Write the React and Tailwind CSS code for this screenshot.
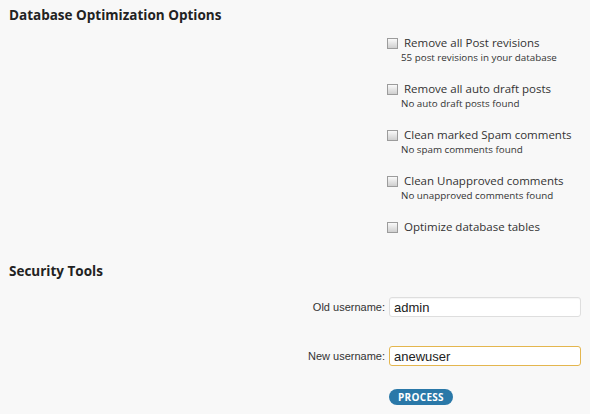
import React, { useState } from 'react'

const options = [
  { label: 'Remove all Post revisions', note: '55 post revisions in your database' },
  { label: 'Remove all auto draft posts', note: 'No auto draft posts found' },
  { label: 'Clean marked Spam comments', note: 'No spam comments found' },
  { label: 'Clean Unapproved comments', note: 'No unapproved comments found' },
  { label: 'Optimize database tables', note: null },
]

function Checkbox() {
  return (
    <span className="mt-[3px] block h-[11px] w-[11px] shrink-0 border border-[#9c9c9c] bg-linear-to-b from-[#fafafa] to-[#cfcfcf]" />
  )
}

export default function App() {
  const [oldName, setOldName] = useState('admin')
  const [newName, setNewName] = useState('anewuser')

  return (
    <div
      className="min-h-[414px] w-[590px] bg-[#f8f8f8] px-[9px] text-[#333]"
      style={{ fontFamily: '"Open Sans", "DejaVu Sans", sans-serif' }}
    >
      {/* Database options */}
      <h2 className="pt-[6px] text-[13.5px] leading-[18px] font-bold text-[#222]">Database Optimization Options</h2>

      <div className="flex flex-col gap-[17px] pt-[11px] pl-[378px]">
        {options.map((o) => (
          <div key={o.label} className="flex gap-[6px]">
            <Checkbox />
            <div>
              <div className="text-[11.5px] leading-[16px]">{o.label}</div>
              {o.note && <div className="pt-[1px] -ml-[3px] text-[9.8px] leading-[12px]">{o.note}</div>}
            </div>
          </div>
        ))}
      </div>

      {/* Security */}
      <h2 className="pt-[27px] text-[13.5px] leading-[18px] font-bold text-[#222]">Security Tools</h2>

      <div
        className="grid grid-cols-[376px_192px] items-center gap-x-[4px] pt-[17px]"
        style={{ fontFamily: '"Liberation Sans", Arial, sans-serif' }}
      >
        <label className="text-right text-[11px]">Old username:</label>
        <input
          value={oldName}
          onChange={(e) => setOldName(e.target.value)}
          className="h-[20px] rounded-[3px] border border-[#dedede] bg-white px-[4px] text-[13px] text-[#222] shadow-[inset_0_1px_1px_rgba(0,0,0,0.04)] outline-none"
        />
        <label className="mt-[29px] text-right text-[11px]">New username:</label>
        <input
          value={newName}
          onChange={(e) => setNewName(e.target.value)}
          className="mt-[29px] h-[20px] rounded-[3px] border border-[#e4b64e] bg-white px-[4px] text-[13px] text-[#222] outline-none"
        />
        <div />
        <div className="mt-[23px] flex">
          <button
            className="flex h-[16px] items-center rounded-full bg-[#2a78a8] px-[9px] text-[10px] font-bold tracking-[0.3px] text-white"
            style={{ fontFamily: '"Open Sans", "DejaVu Sans", sans-serif' }}
          >
            PROCESS
          </button>
        </div>
      </div>
    </div>
  )
}
